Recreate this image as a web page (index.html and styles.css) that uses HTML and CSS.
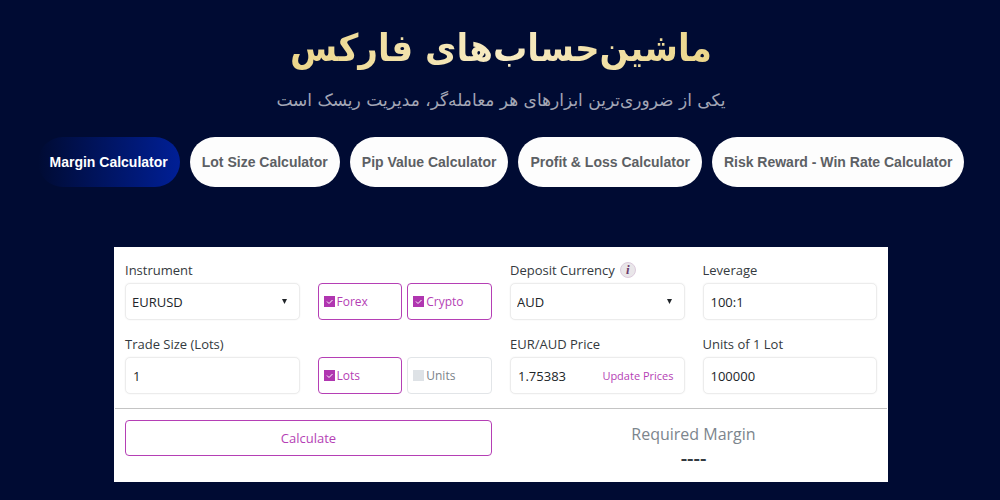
FILE: index.html
```html
<!DOCTYPE html>
<html lang="fa">
<head>
    <meta charset="UTF-8">
    <meta name="viewport" content="width=device-width, initial-scale=1.0">
    <title>ماشین‌حساب‌های فارکس</title>
    <link rel="stylesheet" href="styles.css">
</head>
<body>
    <header class="page-header" dir="rtl">
        <h1>ماشین‌حساب‌های فارکس</h1>
        <p>یکی از ضروری‌ترین ابزارهای هر معامله‌گر، مدیریت ریسک است</p>
    </header>

    <nav class="tabs">
        <button type="button" class="tab active">Margin Calculator</button>
        <button type="button" class="tab">Lot Size Calculator</button>
        <button type="button" class="tab">Pip Value Calculator</button>
        <button type="button" class="tab">Profit &amp; Loss Calculator</button>
        <button type="button" class="tab">Risk Reward - Win Rate Calculator</button>
    </nav>

    <form class="calculator" lang="en">
        <div class="fields">
            <div class="field">
                <label for="instrument">Instrument</label>
                <select id="instrument" class="control">
                    <option>EURUSD</option>
                </select>
            </div>
            <div class="checks">
                <label class="check"><input type="checkbox" checked><span>Forex</span></label>
                <label class="check"><input type="checkbox" checked><span>Crypto</span></label>
            </div>
            <div class="field">
                <div class="label-row">
                    <label for="currency">Deposit Currency</label>
                    <button type="button" class="info" aria-label="Info">i</button>
                </div>
                <select id="currency" class="control">
                    <option>AUD</option>
                </select>
            </div>
            <div class="field">
                <label for="leverage">Leverage</label>
                <input type="text" id="leverage" class="control" value="100:1">
            </div>

            <div class="field">
                <label for="trade-size">Trade Size (Lots)</label>
                <input type="text" id="trade-size" class="control" value="1">
            </div>
            <div class="checks">
                <label class="check"><input type="checkbox" checked><span>Lots</span></label>
                <label class="check"><input type="checkbox"><span>Units</span></label>
            </div>
            <div class="field">
                <label for="price">EUR/AUD Price</label>
                <div class="control price">
                    <input type="text" id="price" value="1.75383">
                    <button type="button">Update Prices</button>
                </div>
            </div>
            <div class="field">
                <label for="units">Units of 1 Lot</label>
                <input type="text" id="units" class="control" value="100000">
            </div>
        </div>

        <div class="result-row">
            <button type="button" class="calculate">Calculate</button>
            <div class="result">
                <h2>Required Margin</h2>
                <output>----</output>
            </div>
        </div>
    </form>
</body>
</html>
```
FILE: styles.css
```css
* {
    box-sizing: border-box;
}

body {
    margin: 0;
    padding: 16px 0 18px 2px;
    background-color: #000b33;
    font-family: "Open Sans", "Noto Sans", sans-serif;
    font-size: 13px;
    color: #343a40;
}

.page-header {
    text-align: center;
}

h1 {
    width: fit-content;
    margin: 0 auto;
    font-family: "DejaVu Sans Condensed", "DejaVu Sans", sans-serif;
    font-size: 38px;
    line-height: 64px;
    background: linear-gradient(90deg, #ecd68a, #f7ebc4, #ecd68a);
    -webkit-background-clip: text;
    background-clip: text;
    color: transparent;
}

.page-header p {
    margin: 8px 0 0;
    font-family: "DejaVu Sans", sans-serif;
    font-size: 17px;
    line-height: 24px;
    color: #a3a6b5;
}

.tabs {
    display: flex;
    justify-content: center;
    gap: 10px;
    margin-top: 25px;
}

.tab {
    height: 50px;
    padding: 0 12px;
    border: none;
    border-radius: 25px;
    background-color: #fdfdfd;
    color: #5c6064;
    font-family: "Liberation Sans", Arial, sans-serif;
    font-size: 14px;
    font-weight: bold;
    white-space: nowrap;
    cursor: pointer;
}

.tab.active {
    background: linear-gradient(90deg, #000b33, #001f96);
    color: #fff;
}

.calculator {
    width: 78%;
    max-width: 774px;
    margin: 60px auto 0;
    background-color: #fff;
}

.fields {
    display: grid;
    grid-template-columns: repeat(4, 1fr);
    gap: 14px 18px;
    padding: 13px 11px 14px;
}

.field,
.checks {
    min-width: 0;
}

.field > label,
.label-row {
    display: flex;
    align-items: center;
    gap: 5px;
    height: 20px;
    margin-bottom: 3px;
    white-space: nowrap;
}

.control {
    width: 100%;
    height: 37px;
    padding: 0 7px;
    border: 1px solid #ececec;
    border-radius: 5px;
    background-color: #fff;
    box-shadow: 0 0 2px #f0f0f0;
    color: #212529;
    font-family: inherit;
    font-size: 13px;
}

select.control {
    padding: 0 6px;
    appearance: none;
    background-image: url("data:image/svg+xml,%3Csvg xmlns='http://www.w3.org/2000/svg' width='5' height='5'%3E%3Cpath d='M0 0h5L2.5 5z' fill='%23212529'/%3E%3C/svg%3E");
    background-repeat: no-repeat;
    background-position: right 12px center;
}

.info {
    width: 16px;
    height: 16px;
    padding: 0;
    border: 1px solid #dccbdc;
    border-radius: 50%;
    background-color: #e9e6e9;
    color: #6b3a6b;
    font-family: "Liberation Serif", serif;
    font-size: 13px;
    font-style: italic;
    font-weight: bold;
    line-height: 12px;
}

.checks {
    display: flex;
    align-items: flex-end;
    gap: 5px;
}

.check {
    display: flex;
    flex: 1;
    align-items: center;
    gap: 2px;
    height: 37px;
    padding: 0 5px;
    border: 1px solid #e2e5e8;
    border-radius: 4px;
    color: #7c838a;
    font-size: 12px;
}

.check:has(:checked) {
    border-color: #b53fb5;
    color: #b53fb5;
}

.check input {
    appearance: none;
    width: 11px;
    height: 11px;
    margin: 0;
    background-color: #dee2e6;
}

.check input:checked {
    background: #b036b0 url("data:image/svg+xml,%3Csvg xmlns='http://www.w3.org/2000/svg' viewBox='0 0 11 11'%3E%3Cpath d='M3 5.5l2 2L8.5 4' fill='none' stroke='white'/%3E%3C/svg%3E") center / 11px;
}

.price {
    display: flex;
    align-items: center;
}

.price input {
    flex: 1;
    min-width: 0;
    padding: 0;
    border: none;
    color: inherit;
    font: inherit;
}

.price button {
    padding: 0 3px;
    border: none;
    background: none;
    color: #b53fb5;
    font-family: inherit;
    font-size: 11px;
}

.result-row {
    display: grid;
    grid-template-columns: 1fr 1fr;
    gap: 18px;
    margin: 0 1px;
    padding: 11px 10px 12px;
    border-top: 1px solid #c4c4c4;
}

.calculate {
    height: 36px;
    border: 1px solid #b53fb5;
    border-radius: 4px;
    background-color: #fff;
    color: #b53fb5;
    font-family: inherit;
    font-size: 13px;
}

.result {
    text-align: center;
}

.result h2 {
    margin: 3px 0 0;
    font-size: 16px;
    font-weight: normal;
    line-height: 22px;
    color: #7c858d;
}

.result output {
    display: block;
    font-size: 20px;
    font-weight: 600;
    line-height: 25px;
}
```
